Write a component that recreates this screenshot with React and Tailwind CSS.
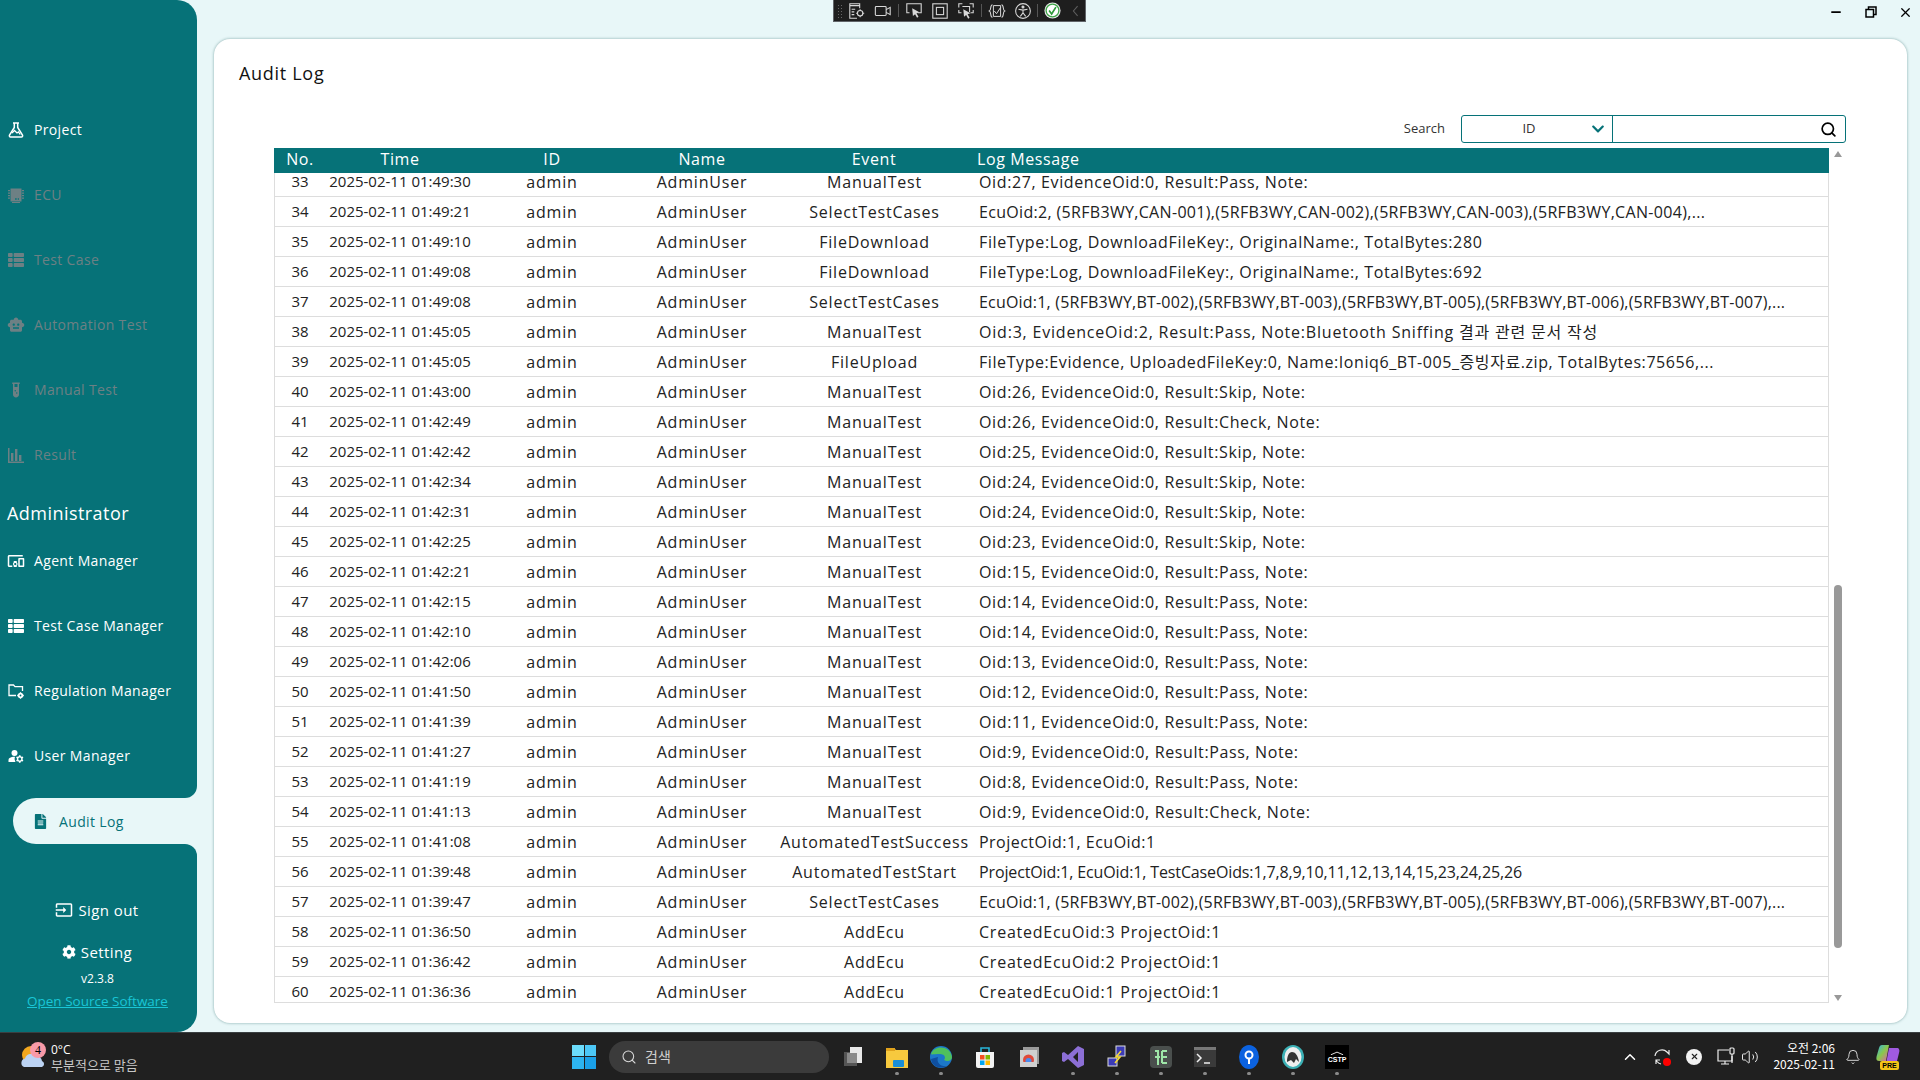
import React from "react";
import { FaThList, FaFileAlt, FaCog, FaChevronDown } from "react-icons/fa";
import { MdSmartToy, MdOutlineDevicesOther, MdManageAccounts, MdInput } from "react-icons/md";
import { RiTestTubeFill } from "react-icons/ri";
import { Search, X, Minus, ChevronUp, Bell, Volume2 } from "lucide-react";

const F = "font-['Open_Sans','Noto_Sans_CJK_KR',sans-serif]";

const Bars = ({ className }) => (
  <svg viewBox="0 0 16 16" className={className} fill="currentColor">
    <path d="M0 1h1.500v13.500H16V16H0z" />
    <rect x="3" y="6" width="2.400" height="8" />
    <rect x="7" y="2" width="2.400" height="12" />
    <rect x="11" y="8" width="2.400" height="6" />
  </svg>
);
const Flask = ({ className }) => (
  <svg viewBox="0 0 16 16" className={className} fill="none" stroke="currentColor" strokeWidth="1.500">
    <path d="M5 1h6M6.300 1v4.500L1.500 13.200c-.4.800.1 1.800 1 1.800h11c.9 0 1.400-1 1-1.800L9.700 5.500V1" />
    <path d="M4 11l2.500-2.500L9 11l1.500-1 1.700 2.500" strokeWidth="1.300" />
  </svg>
);
const Chip = ({ className }) => (
  <svg viewBox="0 0 16 16" className={className} fill="currentColor">
    <rect x="2.500" y="1.500" width="11" height="13" />
    <path d="M0 3h2v1.300H0zM0 5.500h2v1.300H0zM0 8h2v1.300H0zM0 10.500h2v1.300H0zM14 3h2v1.300h-2zM14 5.500h2v1.300h-2zM14 8h2v1.300h-2zM14 10.500h2v1.300h-2zM4 15h8v1H4z" />
    <path d="M7 11h.7v2H7zM8.500 11h.7v2h-.7zM10 11h.7v2H10z" fill="#067278" />
  </svg>
);
const FolderCog = ({ className }) => (
  <svg viewBox="0 0 16 16" className={className} fill="none" stroke="currentColor" strokeWidth="1.300">
    <path d="M8 12.500H1V2h4.500l1.500 1.700h7.500V8" />
    <circle cx="12.500" cy="12.500" r="1.800" strokeWidth="1.800" />
    <path d="M12.500 9.200v1M12.500 14.800v1M9.200 12.500h1M14.800 12.500h1" strokeWidth="1.300" />
  </svg>
);

const top = [
  { t: "Project", I: Flask, on: true },
  { t: "ECU", I: Chip },
  { t: "Test Case", I: FaThList },
  { t: "Automation Test", I: MdSmartToy, big: true },
  { t: "Manual Test", I: RiTestTubeFill, big: true },
  { t: "Result", I: Bars },
];
const admin = [
  { t: "Agent Manager", I: MdOutlineDevicesOther, on: true, big: true },
  { t: "Test Case Manager", I: FaThList, on: true },
  { t: "Regulation Manager", I: FolderCog, on: true },
  { t: "User Manager", I: MdManageAccounts, on: true, big: true },
];

const NavItem = ({ t, I, on, big }) => (
  <div className={`flex h-[65px] items-center pl-[8px] ${on ? "text-white" : "text-[#6d8084]"}`}>
    <span className="flex w-[16px] justify-center">
      <I className={big ? "h-[18px] w-[18px] shrink-0" : "h-[16px] w-[16px] shrink-0"} />
    </span>
    <span className="ml-[10px] text-[14px] font-medium tracking-[0.35px] whitespace-nowrap">{t}</span>
  </div>
);

const T = "tracking-[0.62px]";
const rows = [
  [33, "2025-02-11 01:49:30", "ManualTest", "Oid:27, EvidenceOid:0, Result:Pass, Note:", T],
  [34, "2025-02-11 01:49:21", "SelectTestCases", "EcuOid:2, (5RFB3WY,CAN-001),(5RFB3WY,CAN-002),(5RFB3WY,CAN-003),(5RFB3WY,CAN-004),...", "tracking-[0.32px]"],
  [35, "2025-02-11 01:49:10", "FileDownload", "FileType:Log, DownloadFileKey:, OriginalName:, TotalBytes:280", T],
  [36, "2025-02-11 01:49:08", "FileDownload", "FileType:Log, DownloadFileKey:, OriginalName:, TotalBytes:692", T],
  [37, "2025-02-11 01:49:08", "SelectTestCases", "EcuOid:1, (5RFB3WY,BT-002),(5RFB3WY,BT-003),(5RFB3WY,BT-005),(5RFB3WY,BT-006),(5RFB3WY,BT-007),...", "tracking-[0.2px]"],
  [38, "2025-02-11 01:45:05", "ManualTest", "Oid:3, EvidenceOid:2, Result:Pass, Note:Bluetooth Sniffing 결과 관련 문서 작성", "tracking-[0.8px]"],
  [39, "2025-02-11 01:45:05", "FileUpload", "FileType:Evidence, UploadedFileKey:0, Name:Ioniq6_BT-005_증빙자료.zip, TotalBytes:75656,...", "tracking-[0.58px]"],
  [40, "2025-02-11 01:43:00", "ManualTest", "Oid:26, EvidenceOid:0, Result:Skip, Note:", T],
  [41, "2025-02-11 01:42:49", "ManualTest", "Oid:26, EvidenceOid:0, Result:Check, Note:", T],
  [42, "2025-02-11 01:42:42", "ManualTest", "Oid:25, EvidenceOid:0, Result:Skip, Note:", T],
  [43, "2025-02-11 01:42:34", "ManualTest", "Oid:24, EvidenceOid:0, Result:Skip, Note:", T],
  [44, "2025-02-11 01:42:31", "ManualTest", "Oid:24, EvidenceOid:0, Result:Skip, Note:", T],
  [45, "2025-02-11 01:42:25", "ManualTest", "Oid:23, EvidenceOid:0, Result:Skip, Note:", T],
  [46, "2025-02-11 01:42:21", "ManualTest", "Oid:15, EvidenceOid:0, Result:Pass, Note:", T],
  [47, "2025-02-11 01:42:15", "ManualTest", "Oid:14, EvidenceOid:0, Result:Pass, Note:", T],
  [48, "2025-02-11 01:42:10", "ManualTest", "Oid:14, EvidenceOid:0, Result:Pass, Note:", T],
  [49, "2025-02-11 01:42:06", "ManualTest", "Oid:13, EvidenceOid:0, Result:Pass, Note:", T],
  [50, "2025-02-11 01:41:50", "ManualTest", "Oid:12, EvidenceOid:0, Result:Pass, Note:", T],
  [51, "2025-02-11 01:41:39", "ManualTest", "Oid:11, EvidenceOid:0, Result:Pass, Note:", T],
  [52, "2025-02-11 01:41:27", "ManualTest", "Oid:9, EvidenceOid:0, Result:Pass, Note:", T],
  [53, "2025-02-11 01:41:19", "ManualTest", "Oid:8, EvidenceOid:0, Result:Pass, Note:", T],
  [54, "2025-02-11 01:41:13", "ManualTest", "Oid:9, EvidenceOid:0, Result:Check, Note:", T],
  [55, "2025-02-11 01:41:08", "AutomatedTestSuccess", "ProjectOid:1, EcuOid:1", "tracking-[0.48px]"],
  [56, "2025-02-11 01:39:48", "AutomatedTestStart", "ProjectOid:1, EcuOid:1, TestCaseOids:1,7,8,9,10,11,12,13,14,15,23,24,25,26", "tracking-[-0.13px]"],
  [57, "2025-02-11 01:39:47", "SelectTestCases", "EcuOid:1, (5RFB3WY,BT-002),(5RFB3WY,BT-003),(5RFB3WY,BT-005),(5RFB3WY,BT-006),(5RFB3WY,BT-007),...", "tracking-[0.2px]"],
  [58, "2025-02-11 01:36:50", "AddEcu", "CreatedEcuOid:3 ProjectOid:1", "tracking-[0.76px]"],
  [59, "2025-02-11 01:36:42", "AddEcu", "CreatedEcuOid:2 ProjectOid:1", "tracking-[0.76px]"],
  [60, "2025-02-11 01:36:36", "AddEcu", "CreatedEcuOid:1 ProjectOid:1", "tracking-[0.76px]"],
];

const COLS = "grid grid-cols-[52px_148px_156px_144px_200px_1fr]";

const TbIcon = ({ children, w = "w-[26px]" }) => (
  <div className={`flex h-full ${w} shrink-0 items-center justify-center`}>
    <svg viewBox="0 0 20 20" className="h-[18px] w-[18px]" fill="none" stroke="#d8d8d8" strokeWidth="1.200">{children}</svg>
  </div>
);
const TbDiv = ({ w }) => (
  <div className={`flex h-full ${w} shrink-0 items-center justify-center`}>
    <div className="h-[13px] w-px bg-[#555]" />
  </div>
);
const Cursor = ({ x = 8, y = 7 }) => (
  <path transform={`translate(${x} ${y})`} d="M0 0l8 4.500-3.200 1L7 9.500l-1.600 1-2.200-4-2.400 2z" fill="#d8d8d8" stroke="none" />
);

const Toolbar = () => (
  <div className="absolute left-[636px] top-0 z-10 flex h-[22px] w-[253px] border-x border-b border-[#606468] bg-[#1e1e1e]">
    <div className="ml-[3px] mr-[2px] flex w-[5px] shrink-0 flex-col justify-center gap-[2px]">
      <div className="h-[14px] w-[5px] bg-[radial-gradient(#666_35%,transparent_40%)] bg-[length:3px_3px]" />
    </div>
    <TbIcon>
      <path d="M2 2h11v2H2zM2 4v14h8M13 4v3M4 8h4M4 11h3M4 14h3" />
      <circle cx="13.500" cy="12.500" r="3" /><path d="M13.500 8v2M13.500 15v2M9 12.500h2M16 12.500h2" />
    </TbIcon>
    <TbIcon>
      <rect x="1.500" y="5" width="12" height="10" rx="1" /><path d="M13.500 8.500L18 6v8l-4.500-2.500" />
    </TbIcon>
    <TbDiv w="w-[5px]" />
    <TbIcon><path d="M5 12H2V2h16v10h-4" /><Cursor /></TbIcon>
    <TbIcon><rect x="2" y="2" width="16" height="16" /><rect x="6" y="6" width="8" height="8" /></TbIcon>
    <TbIcon><path d="M2 6V2h4M14 2h4v4M2 9v3h3M18 9v3h-3M6 5h8v6" /><Cursor x={7} y={8} /></TbIcon>
    <TbDiv w="w-[5px]" />
    <TbIcon>
      <path d="M5 3C2 3 4 9 1.500 10 4 11 2 17 5 17M15 3c3 0 1 6 3.500 7-2.500 1-.5 7-3.500 7" />
      <path d="M6 4h8v12H6zM7 10l2.500 3L14 6" strokeWidth="1.100" />
    </TbIcon>
    <TbIcon>
      <circle cx="10" cy="10" r="8.200" /><circle cx="10" cy="5.500" r="1.100" fill="#d8d8d8" /><path d="M5 8l5 1 5-1M10 9v3l-3 4M10 12l3 4" />
    </TbIcon>
    <TbDiv w="w-[3px]" />
    <div className="flex h-full w-[26px] shrink-0 items-center justify-center">
      <svg viewBox="0 0 20 20" className="h-[17px] w-[17px]">
        <circle cx="10" cy="10" r="9.500" fill="#e8e8e8" />
        <circle cx="10" cy="10" r="7.500" fill="#fff" stroke="#3fa648" strokeWidth="1.500" />
        <path d="M6 10l3 4 5-8" fill="none" stroke="#2e9a3a" strokeWidth="2" />
      </svg>
    </div>
    <div className="flex h-full flex-1 items-center justify-center">
      <svg viewBox="0 0 10 16" className="h-[12px] w-[7px]" fill="none" stroke="#5f5f5f" strokeWidth="1.500"><path d="M8 1L2 8l6 7" /></svg>
    </div>
  </div>
);

const TaskIcon = ({ children, dot }) => (
  <div className="relative flex h-full w-[44px] shrink-0 items-center justify-center">
    <svg viewBox="0 0 24 24" className="h-[24px] w-[24px]">{children}</svg>
    {dot && <div className="absolute bottom-[5px] left-[20px] h-[3px] w-[4px] rounded-full bg-[#8a8a8a]" />}
  </div>
);

const Taskbar = () => (
  <div className={`flex h-[48px] shrink-0 items-center border-t border-[#3a3f41] bg-[#202020] text-white ${F}`}>
    <div className="flex h-full w-[562px] shrink-0 items-center pl-[20px]">
      <div className="relative h-[30px] w-[26px] shrink-0">
        <svg viewBox="0 0 26 30" className="h-[30px] w-[26px]">
          <circle cx="11" cy="13" r="9" fill="#f2a71f" />
          <path d="M4 25a4.500 4.500 0 0 1 1-8.500A6.500 6.500 0 0 1 16 14a5.500 5.500 0 0 1 6 5 3.200 3.200 0 0 1 0 6z" fill="#bcd3f3" />
        </svg>
        <div className="absolute left-[10px] top-0 flex h-[16px] w-[16px] items-center justify-center rounded-full bg-[#f99aa8] font-['Liberation_Serif',serif] text-[12px] text-black">4</div>
      </div>
      <div className="ml-[5px] flex flex-col font-['Noto_Sans_CJK_KR',sans-serif] leading-[15px]">
        <span className="text-[12px] font-['Open_Sans',sans-serif]">0°C</span>
        <span className="text-[13px] text-[#c8c8c8]">부분적으로 맑음</span>
      </div>
    </div>
    <div className="flex h-full w-[44px] shrink-0 items-center justify-center">
      <div className="grid h-[24px] w-[24px] grid-cols-2 gap-[1px]">
        <div className="bg-[#6cdcfb]" /><div className="bg-[#4cc7f6]" /><div className="bg-[#2db4f0]" /><div className="bg-[#1aa0e8]" />
      </div>
    </div>
    <div className="ml-[3px] flex h-[32px] w-[220px] shrink-0 items-center rounded-full bg-[#3b3b3b] pl-[12px] font-['Noto_Sans_CJK_KR',sans-serif] text-[14px] text-[#cfcfcf]">
      <Search className="h-[16px] w-[16px] text-[#d8d8d8]" strokeWidth={1.600} />
      <span className="ml-[8px]">검색</span>
    </div>
    <div className="ml-[2px] flex h-full">
      <TaskIcon><rect x="3" y="7" width="13" height="14" fill="#555" /><rect x="9" y="2" width="12" height="16" fill="#e8e8e8" /><rect x="6" y="8" width="10" height="10" fill="#8a8a8a" /></TaskIcon>
      <TaskIcon dot><path d="M1 3h8l2 2h12v18H1z" fill="#f7c93e" /><rect x="1" y="3" width="9" height="3" fill="#e0a21c" /><rect x="8" y="15" width="11" height="7" rx="1" fill="#1a8ed6" /></TaskIcon>
      <TaskIcon dot><circle cx="12" cy="12" r="11" fill="#1c78c9" /><path d="M2 9C5 0 21 0 23 12c0 4-5 5-8 3 2-2 1-6-4-6-5 0-9 1-9 0z" fill="#4fc15d" /><path d="M9 12c-2 6 3 10 9 9-5 3-15 2-16-7" fill="#0f4fa0" /></TaskIcon>
      <TaskIcon><path d="M3 7h18v14a2 2 0 0 1-2 2H5a2 2 0 0 1-2-2z" fill="#f3f3f3" /><path d="M8 7V3h8v4" fill="none" stroke="#27b5d9" strokeWidth="1.600" /><rect x="7" y="10" width="4.500" height="4.500" fill="#f25022" /><rect x="12.500" y="10" width="4.500" height="4.500" fill="#7fba00" /><rect x="7" y="15.500" width="4.500" height="4.500" fill="#00a4ef" /><rect x="12.500" y="15.500" width="4.500" height="4.500" fill="#ffb900" /></TaskIcon>
      <TaskIcon><rect x="6" y="2" width="16" height="17" fill="#9a9a9a" /><rect x="3" y="5" width="17" height="17" fill="#d0d0d0" /><circle cx="11.500" cy="15" r="5.500" fill="#e04a3a" /><circle cx="11.500" cy="16" r="3" fill="#4a8bf0" /><rect x="6" y="17" width="11" height="4" fill="#d0d0d0" /></TaskIcon>
      <TaskIcon dot><path d="M17 1l6 3v16l-6 3-10-9-4 3-2-1V8l2-1 4 3zM17 7l-5 5 5 5z" fill="#8c6fd6" /></TaskIcon>
      <TaskIcon dot><rect x="11" y="1" width="9" height="10" fill="#3b3bb5" stroke="#ddd" /><rect x="3" y="13" width="9" height="8" fill="#3b3bb5" stroke="#ddd" /><path d="M16 6l-5 6h4l-5 6" fill="none" stroke="#f4d93a" strokeWidth="1.600" /></TaskIcon>
      <TaskIcon dot><rect x="1" y="1" width="22" height="22" rx="4" fill="#4a4f4d" /><path d="M6 6h3v14M6 12h5M13 6h5M13 12h5M13 18h5M13 6v12" fill="none" stroke="#9fe6a8" strokeWidth="2" /></TaskIcon>
      <TaskIcon dot><rect x="1" y="2" width="22" height="20" fill="#3a3a3a" /><rect x="1" y="2" width="22" height="3" fill="#777" /><path d="M4 9l4 4-4 4" fill="none" stroke="#eee" strokeWidth="1.500" /><path d="M11 18h6" stroke="#eee" strokeWidth="1.500" /></TaskIcon>
      <TaskIcon dot><ellipse cx="12" cy="12" rx="10" ry="12" fill="#0b62e0" /><circle cx="12" cy="10" r="3.500" fill="none" stroke="#fff" strokeWidth="2" /><path d="M12 13v6" stroke="#fff" strokeWidth="2" /></TaskIcon>
      <TaskIcon dot><ellipse cx="12" cy="12" rx="11" ry="12" fill="#3bb0b5" /><ellipse cx="12" cy="12" rx="8.500" ry="10" fill="#eee" /><path d="M6 17c0-6 2-10 5-10s6 3 7 10l-3-3-2 4-3-3z" fill="#333" /></TaskIcon>
      <div className="relative flex h-full w-[44px] shrink-0 items-center justify-center">
        <div className="flex h-[24px] w-[24px] flex-col items-center justify-center bg-black font-['Liberation_Sans',sans-serif] text-[7px] font-bold leading-none text-white">
          <svg viewBox="0 0 16 4" className="mb-[1px] h-[4px] w-[14px]" fill="none" stroke="#fff" strokeWidth="1"><path d="M1 4l7-3 7 3" /></svg>
          CSTP
        </div>
        <div className="absolute bottom-[5px] left-[20px] h-[3px] w-[4px] rounded-full bg-[#8a8a8a]" />
      </div>
    </div>
    <div className="ml-auto flex h-full items-center pr-[20px]">
      <ChevronUp className="h-[18px] w-[18px] text-white" strokeWidth={2} />
      <div className="relative ml-[14px] h-[18px] w-[18px]">
        <svg viewBox="0 0 18 18" className="h-[18px] w-[18px]" fill="none" stroke="#eee" strokeWidth="1.200"><path d="M2 8a7 7 0 0 1 12-4l2 2V2M3 16v-4h4M3 12l1 1.500A7 7 0 0 0 8 16" /></svg>
        <div className="absolute bottom-0 right-0 h-[8px] w-[8px] rounded-full bg-[#f00]" />
      </div>
      <div className="ml-[15px] flex h-[16px] w-[16px] items-center justify-center rounded-full bg-[#f2f2f2]">
        <X className="h-[9px] w-[9px] text-[#222]" strokeWidth={3} />
      </div>
      <svg viewBox="0 0 20 20" className="ml-[14px] h-[20px] w-[20px]" fill="none" stroke="#eee" strokeWidth="1.200">
        <path d="M13 3H2v11h14V9M9 14v3M5 17h8" /><rect x="14" y="1" width="4" height="6" rx="1" /><path d="M16 7v9" />
      </svg>
      <Volume2 className="ml-[5px] h-[18px] w-[18px] text-[#eee]" strokeWidth={1.300} />
      <div className="ml-[7px] flex w-[69px] -translate-y-px flex-col items-end font-['Noto_Sans_CJK_KR',sans-serif] text-[12px] leading-[16px] text-white">
        <span>오전 2:06</span>
        <span>2025-02-11</span>
      </div>
      <Bell className="ml-[10px] h-[16px] w-[16px] text-[#eee]" strokeWidth={1.300} />
      <div className="relative ml-[15px] h-[26px] w-[24px]">
        <svg viewBox="0 0 24 22" className="h-[22px] w-[24px]">
          <defs>
            <linearGradient id="cp" x1="0" y1="0" x2="1" y2="1">
              <stop offset="0" stopColor="#2fb5e8" /><stop offset="0.500" stopColor="#8bc84a" /><stop offset="1" stopColor="#e55bb0" />
            </linearGradient>
          </defs>
          <path d="M6 1h7l-3 16H3c-3 0-3-3-2-6l2-7c.5-2 1.500-3 3-3z" fill="url(#cp)" />
          <path d="M13 4h8c2 0 3 2 2 5l-2 8c-.5 2-2 3-4 3h-7z" fill="#a05ae0" />
        </svg>
        <div className="absolute bottom-0 left-[4px] flex h-[9px] w-[19px] items-center justify-center rounded-[2px] bg-[#f5c518] font-['Liberation_Sans',sans-serif] text-[7px] font-bold leading-none text-black">PRE</div>
      </div>
    </div>
  </div>
);

export default function App() {
  return (
    <div className={`flex h-screen w-full flex-col overflow-hidden bg-[#e8f7f8] ${F}`}>
      <div className="flex min-h-0 flex-1">
        <aside className="flex w-[197px] shrink-0 flex-col text-white">
          <div className="flex h-[798px] shrink-0 flex-col rounded-tr-[20px] rounded-br-[12px] bg-[#067278] pt-[97px]">
            {top.map((n) => <NavItem key={n.t} {...n} />)}
            <div className="flex h-[41px] items-end pl-[7px] text-[18px] tracking-[0.45px]"><span className="mb-[3px] leading-[24px]">Administrator</span></div>
            {admin.map((n) => <NavItem key={n.t} {...n} />)}
          </div>
          <div className="h-[46px] shrink-0 bg-[#067278] pl-[13px]">
            <div className="flex h-full items-center rounded-l-full bg-[#e8f7f8] pl-[21px] text-[#067278]">
              <FaFileAlt className="h-[15px] w-[13px]" />
              <span className="ml-[12px] text-[14px] font-medium tracking-[0.35px]">Audit Log</span>
            </div>
          </div>
          <div className="flex min-h-0 flex-1 flex-col items-center rounded-tr-[12px] rounded-br-[20px] bg-[#067278] pt-[54px]">
            <div className="-ml-[3px] flex h-[24px] items-center text-[15px] font-medium tracking-[0.4px]">
              <MdInput className="mr-[5px] h-[18px] w-[18px]" /> Sign out
            </div>
            <div className="-ml-[3px] mt-[18px] flex h-[24px] items-center text-[15px] font-medium tracking-[0.4px]">
              <FaCog className="mr-[5px] h-[14px] w-[14px]" /> Setting
            </div>
            <div className="-ml-[2px] mt-[7px] text-[12px] leading-[16px]">v2.3.8</div>
            <div className="-ml-[2px] mt-[6px] text-[13.5px] leading-[16px] text-[#19c6d6] underline">Open Source Software</div>
          </div>
        </aside>

        <main className="relative flex min-w-0 flex-1 flex-col">
          <Toolbar />
          <div className="-mr-[3px] flex h-[39px] shrink-0 justify-end pt-[4px] text-black">
            <div className="flex h-[16px] w-[35px] items-center justify-center"><Minus className="h-[14px] w-[14px]" strokeWidth={3} /></div>
            <div className="flex h-[16px] w-[35px] items-center justify-center">
              <svg viewBox="0 0 12 12" className="h-[12px] w-[12px]" fill="none" stroke="#000" strokeWidth="1.500"><rect x="1" y="3.500" width="7.500" height="7.500" /><path d="M3.500 3V1H11v7.500H8.500" /></svg>
            </div>
            <div className="flex h-[16px] w-[35px] items-center justify-center"><X className="h-[15px] w-[15px]" strokeWidth={2} /></div>
          </div>
          <div className="ml-[17px] mr-[13px] flex h-[984px] flex-col rounded-[16px] bg-white pl-[25px] pr-[61px] pt-[20px] shadow-[0_0_3px_rgba(0,70,70,0.45)]">
            <h1 className="h-[28px] text-[18px] font-normal leading-[28px] tracking-[0.7px] text-[#111]">Audit Log</h1>
            <div className="mt-[28px] flex h-[28px] items-center justify-end">
              <span className="text-[13px] text-[#333]">Search</span>
              <div className="ml-[16px] flex h-[28px] w-[385px] rounded-[3px] border border-[#067278]">
                <div className="flex w-[151px] items-center border-r border-[#067278]">
                  <span className="w-[136px] pr-[2px] text-center text-[13px] text-[#333]">ID</span>
                  <FaChevronDown className="ml-[-9px] h-[14px] w-[18px] text-[#067278]" />
                </div>
                <div className="flex flex-1 items-center justify-end pr-[8px]">
                  <Search className="h-[17px] w-[17px] text-black" strokeWidth={2.400} />
                </div>
              </div>
            </div>
            <div className="ml-[35px] mt-[5px] flex h-[855px]">
              <div className="flex min-w-0 flex-1 flex-col">
                <div className={`${COLS} h-[25px] shrink-0 items-start bg-[#067278] text-[16px] leading-[22px] tracking-[0.6px] text-white`}>
                  <div className="text-center">No.</div>
                  <div className="text-center">Time</div>
                  <div className="text-center">ID</div>
                  <div className="text-center">Name</div>
                  <div className="text-center">Event</div>
                  <div className="pl-[3px]">Log Message</div>
                </div>
                <div className="h-[830px] overflow-hidden border-x border-b border-[#ddd]">
                  <div className="-mt-[6px]">
                    {rows.map((r) => (
                      <div key={r[0]} className={`${COLS} -ml-px h-[30px] items-center border-b border-[#ddd] text-[16px] text-[#222] whitespace-nowrap`}>
                        <div className="text-center text-[15px]">{r[0]}</div>
                        <div className="text-center text-[15px]">{r[1]}</div>
                        <div className="text-center tracking-[0.8px]">admin</div>
                        <div className="text-center tracking-[0.8px]">AdminUser</div>
                        <div className="pl-[1px] text-center tracking-[0.8px]">{r[2]}</div>
                        <div className={`pl-[5px] ${r[4]}`}>{r[3]}</div>
                      </div>
                    ))}
                  </div>
                </div>
              </div>
              <div className="flex w-[17px] shrink-0 flex-col pl-[5px]">
                <div className="mt-[3px] h-0 w-0 border-x-[4px] border-b-[6px] border-x-transparent border-b-[#999]" />
                <div className="mt-[428px] h-[363px] w-[8px] rounded-full bg-[#999]" />
                <div className="mt-[47px] h-0 w-0 border-x-[4px] border-t-[6px] border-x-transparent border-t-[#999]" />
              </div>
            </div>
          </div>
        </main>
      </div>
      <Taskbar />
    </div>
  );
}
